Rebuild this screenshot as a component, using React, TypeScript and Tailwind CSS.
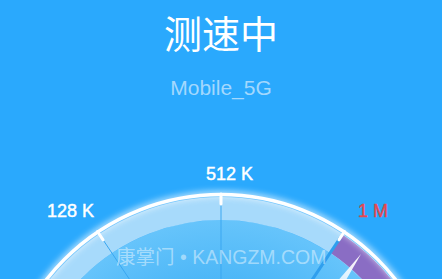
const CX = 221
const CY = 416

const pt = (deg: number, r: number) => {
  const a = (deg * Math.PI) / 180
  return { x: CX + r * Math.sin(a), y: CY - r * Math.cos(a) }
}

const TICKS = [-33.8, 0, 33.8]

function Gauge() {
  const p0 = pt(33.8, 207.5)
  const p1 = pt(75, 207.5)

  return (
    <svg className="block" width="442" height="181" viewBox="0 98 442 181">
      <defs>
        <radialGradient id="inner" cx={CX} cy={CY} r="196" gradientUnits="userSpaceOnUse">
          <stop offset="0.6" stopColor="#45b3f6" />
          <stop offset="1" stopColor="#66c4fb" />
        </radialGradient>
        <linearGradient id="needle" x1="361" y1="254" x2="300" y2="340" gradientUnits="userSpaceOnUse">
          <stop offset="0" stopColor="#ffffff" stopOpacity="1" />
          <stop offset="1" stopColor="#ffffff" stopOpacity="0.25" />
        </linearGradient>
        <filter id="glow" x="-20%" y="-20%" width="140%" height="140%">
          <feGaussianBlur stdDeviation="3" />
        </filter>
      </defs>

      {/* dial face */}
      <circle cx={CX} cy={CY} r="196" fill="url(#inner)" />
      <circle cx={CX} cy={CY} r="207.5" fill="none" stroke="#a7dafb" strokeWidth="23" />

      {/* danger zone */}
      <path
        d={`M ${p0.x} ${p0.y} A 207.5 207.5 0 0 1 ${p1.x} ${p1.y}`}
        fill="none"
        stroke="#8a6dc4"
        strokeWidth="22"
      />

      {/* radial lines */}
      {TICKS.map((t) => {
        const a = pt(t, 214)
        const b = pt(t, 60)
        return (
          <line
            key={t}
            x1={a.x}
            y1={a.y}
            x2={b.x}
            y2={b.y}
            stroke={t > 0 ? '#2f9fee' : '#3aa7f1'}
            strokeWidth={t > 0 ? 3 : 1}
          />
        )
      })}

      {/* outer ring + glow */}
      <circle cx={CX} cy={CY} r="222" fill="none" stroke="#ffffff" strokeWidth="6" opacity="0.7" filter="url(#glow)" />
      <circle cx={CX} cy={CY} r="221.5" fill="none" stroke="#ffffff" strokeWidth="3.5" />

      {/* ticks */}
      {TICKS.map((t) => {
        const a = pt(t, 222)
        const b = pt(t, 212)
        return (
          <line
            key={t}
            x1={a.x}
            y1={a.y}
            x2={b.x}
            y2={b.y}
            stroke="#ffffff"
            strokeWidth="3"
            strokeLinecap="round"
          />
        )
      })}

      {/* needle */}
      <polygon points="361,254 308.2,345.8 291.8,334.2" fill="url(#needle)" />

      {/* scale labels */}
      <g fontFamily="'Liberation Sans', Arial, sans-serif" fontSize="18" strokeWidth="0.45">
        <text x="47" y="217" fill="#ffffff" stroke="#ffffff">128 K</text>
        <text x="206" y="180" fill="#ffffff" stroke="#ffffff">512 K</text>
        <text x="358" y="217" fill="#e5484f" stroke="#e5484f">1 M</text>
      </g>
    </svg>
  )
}

export default function App() {
  return (
    <div className="h-[279px] w-full overflow-hidden bg-[#2aa9fd]">
      <div className="flex flex-col items-center">
        <h1 className="pt-[13px] text-[38px] leading-[38px] text-white [font-family:'Noto_Sans_CJK_SC',sans-serif]">
          测速中
        </h1>
        <p className="mt-[26px] text-[21px] leading-[21px] text-[#a3d8fd] [font-family:'Liberation_Sans',Arial,sans-serif]">
          Mobile_5G
        </p>
      </div>

      <div className="relative">
        <Gauge />
        {/* watermark */}
        <div className="absolute left-[116px] top-[150px] text-[19.5px] leading-[19px] text-white/45 [font-family:'Liberation_Sans','Noto_Sans_CJK_SC',sans-serif] whitespace-nowrap">
          康掌门 • KANGZM.COM
        </div>
      </div>
    </div>
  )
}
